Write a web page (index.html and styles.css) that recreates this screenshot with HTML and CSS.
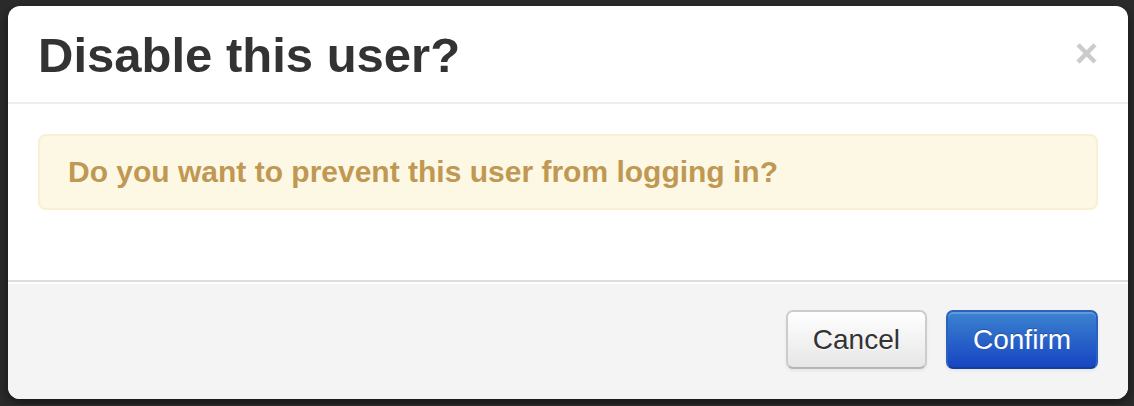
FILE: index.html
```html
<!DOCTYPE html>
<html lang="en">
<head>
<meta charset="utf-8">
<title>Disable this user?</title>
<link rel="stylesheet" href="styles.css">
</head>
<body>
<div class="modal">
  <div class="modal-header">
    <h3 class="modal-title">Disable this user?</h3>
    <button class="close" type="button" aria-label="Close">×</button>
  </div>
  <div class="modal-body">
    <div class="alert">Do you want to prevent this user from logging in?</div>
  </div>
  <div class="modal-footer">
    <button class="btn" type="button">Cancel</button>
    <button class="btn btn-primary" type="button">Confirm</button>
  </div>
</div>
</body>
</html>
```

FILE: styles.css
```css
html, body {
  margin: 0;
  padding: 0;
}

body {
  background: #2b2b2b;
  font-family: "Liberation Sans", Arial, Helvetica, sans-serif;
  padding: 6px 6px 6px 8px;
}

.modal {
  width: 1120px;
  background: #fff;
  border-radius: 12px;
  overflow: hidden;
  box-shadow: 0 4px 12px rgba(0, 0, 0, 0.5);
}

.modal-header {
  display: flex;
  justify-content: space-between;
  align-items: flex-start;
  padding: 19px 30px 17px;
  border-bottom: 2px solid #eee;
}

.modal-title {
  margin: 0;
  font-size: 49px;
  line-height: 60px;
  font-weight: bold;
  color: #333;
}

.close {
  margin: 0;
  padding: 0;
  border: 0;
  background: none;
  font-family: "Liberation Sans", Arial, sans-serif;
  font-size: 40px;
  line-height: 40px;
  font-weight: bold;
  color: #000;
  opacity: 0.2;
  margin-top: 8px;
  cursor: pointer;
}

.modal-body {
  padding: 30px;
}

.alert {
  background: #fcf8e3;
  border: 2px solid #fbeed5;
  border-radius: 8px;
  padding: 16px 70px 16px 28px;
  margin-bottom: 40px;
  color: #c09853;
  font-size: 30px;
  line-height: 40px;
  font-weight: bold;
}

.modal-footer {
  display: flex;
  justify-content: flex-end;
  gap: 19px;
  padding: 28px 30px 30px;
  background: #f4f4f4;
  border-top: 2px solid #ddd;
  box-shadow: inset 0 2px 0 #fff;
}

.btn {
  font-family: "Liberation Sans", Arial, sans-serif;
  font-size: 28px;
  line-height: 39px;
  padding: 8px 25px;
  border-radius: 7px;
  border: 2px solid #ccc;
  border-bottom-color: #b5b5b5;
  color: #333;
  text-shadow: 0 1px 1px rgba(255, 255, 255, 0.75);
  background: linear-gradient(to bottom, #fff, #e6e6e6);
  box-shadow: inset 0 2px 0 rgba(255, 255, 255, 0.2), 0 2px 3px rgba(0, 0, 0, 0.06);
  cursor: pointer;
}

.btn-primary {
  color: #fff;
  text-shadow: 0 -1px 0 rgba(0, 0, 0, 0.25);
  background: linear-gradient(to bottom, #3b83d0, #1745c2);
  border-color: #2a62bf;
  border-bottom-color: #163c9e;
}
```
